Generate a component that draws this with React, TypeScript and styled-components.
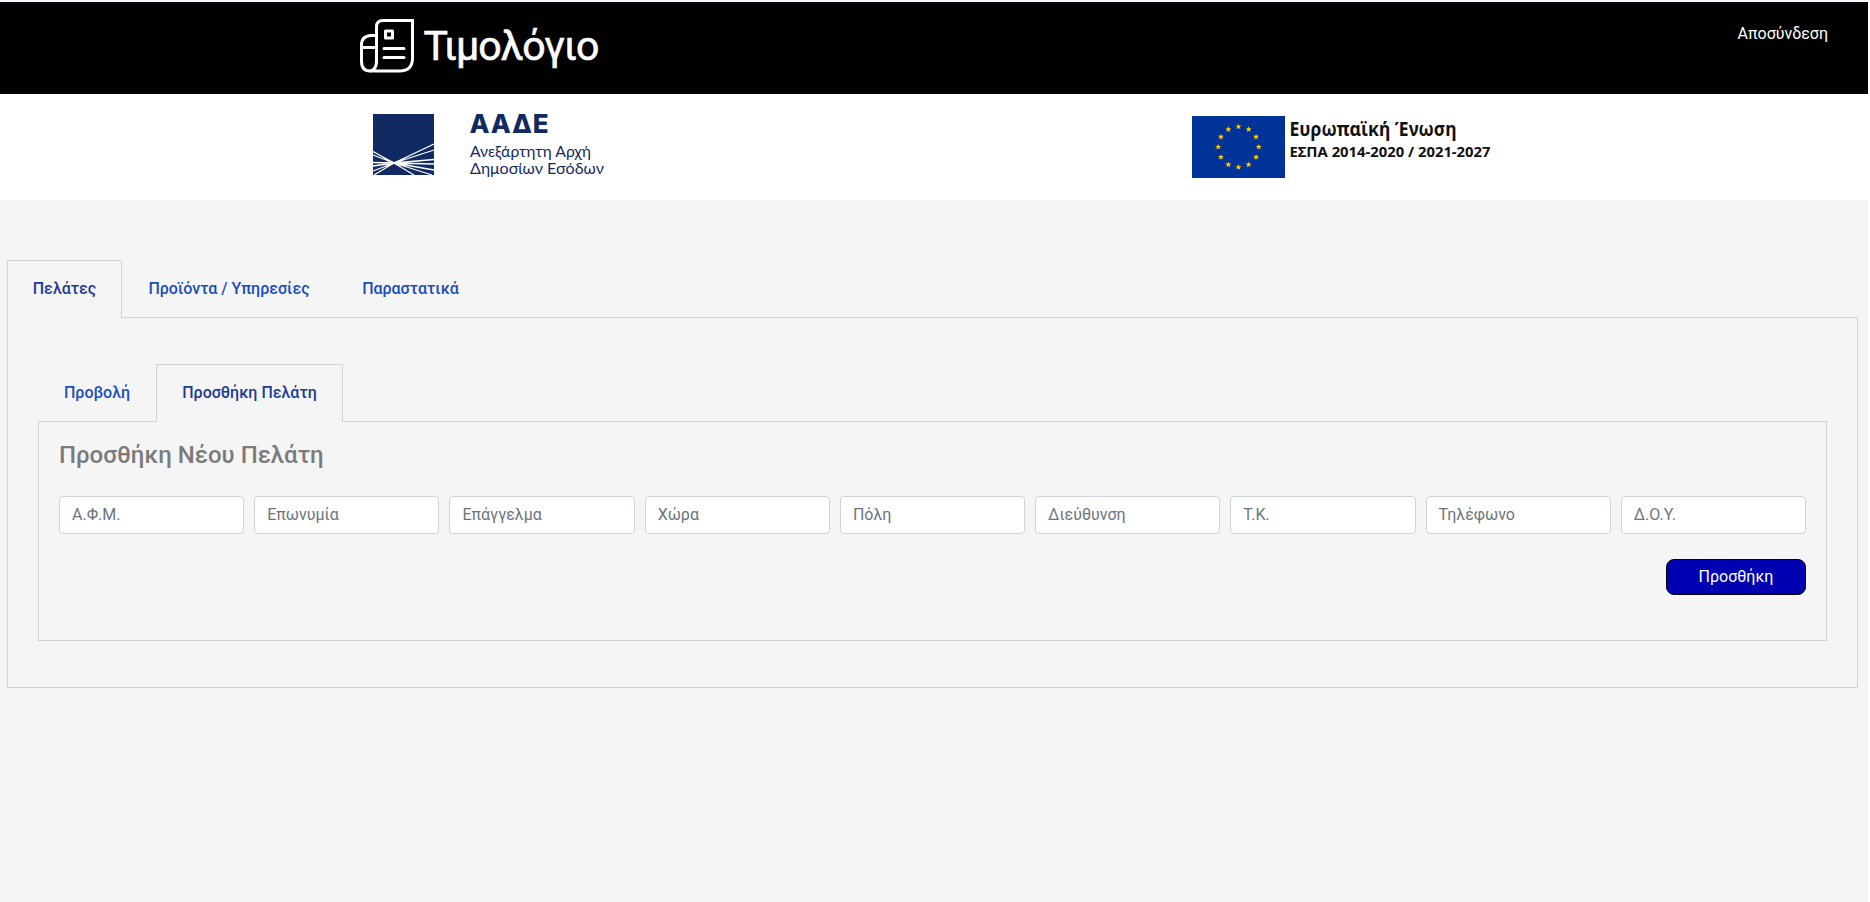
import React from "react";
import styled, { createGlobalStyle } from "styled-components";

const Global = createGlobalStyle`
  *, *::before, *::after { box-sizing: border-box; }
  body { margin: 0; background: #f5f5f5; font-family: Roboto, "Liberation Sans", sans-serif; font-size: 16px; line-height: 24px; }
`;

const Page = styled.div`
  min-height: 902px;
  display: flex;
  flex-direction: column;
  border-right: 2px solid #fff;
  background: #f5f5f5;
`;

const TopBar = styled.header`
  height: 94px;
  display: flex;
  justify-content: space-between;
  align-items: flex-start;
  background: #000;
  border-top: 2px solid #f3f6fb;
  padding: 16px 40px 0 360px;
`;

const Artwork = styled.svg`
  display: block;
  overflow: visible;
`;

const Logout = styled.a`
  color: #fff;
  line-height: 24px;
  margin-top: 4px;
  text-decoration: none;
`;

const Sponsors = styled.div`
  height: 106px;
  display: flex;
  justify-content: space-between;
  align-items: flex-start;
  background: #fff;
  padding: 20px 375px 0 373px;
`;

const SvgText = styled.text<{ $family: string; $weight?: number }>`
  font-family: ${(p) => p.$family}, sans-serif;
  font-weight: ${(p) => p.$weight ?? 400};
`;

const Main = styled.main`
  padding: 60px 10px 0 7px;
`;

const Tabs = styled.nav`
  display: flex;
`;

const Tab = styled.button<{ $active?: boolean; $width: number }>`
  width: ${(p) => p.$width}px;
  height: 58px;
  margin-bottom: -1px;
  padding: 0 0 2px;
  position: relative;
  border: 1px solid ${(p) => (p.$active ? "#d3d3d3" : "transparent")};
  border-bottom: 0;
  background: ${(p) => (p.$active ? "#f5f5f5" : "transparent")};
  color: ${(p) => (p.$active ? "#1c3c94" : "#1a4dbe")};
  font: 500 16px/24px Roboto, sans-serif;
`;

const Panel = styled.section<{ $inner?: boolean }>`
  border: 1px solid #d3d3d3;
  height: ${(p) => (p.$inner ? 220 : 371)}px;
  padding: ${(p) => (p.$inner ? "19px 20px 0" : "46px 30px 0")};
`;

const Title = styled.h2`
  margin: 0 0 26px;
  font-size: 24px;
  line-height: 29px;
  font-weight: 500;
  color: #7b7b7b;
`;

const Fields = styled.div`
  display: grid;
  grid-template-columns: repeat(9, 1fr);
  gap: 10px;
`;

const Field = styled.input`
  width: 100%;
  min-width: 0;
  height: 38px;
  padding: 5px 12px 7px;
  border: 1px solid #ced4da;
  border-radius: 4px;
  background: #fff;
  font: 400 16px/24px Roboto, sans-serif;
  &::placeholder { color: #6c757d; opacity: 1; }
`;

const Actions = styled.div`
  display: flex;
  justify-content: flex-end;
  margin-top: 25px;
`;

const Submit = styled.button`
  width: 140px;
  height: 36px;
  padding: 0 0 1px;
  border: 1px solid #000;
  border-radius: 8px;
  background: #0000b3;
  color: #fff;
  font: 400 16px/24px Roboto, sans-serif;
`;

const stars = Array.from({ length: 12 }, (_, i) => {
  const a = (i * Math.PI) / 6;
  const cx = 46.5 + 20.3 * Math.sin(a);
  const cy = 31 - 20.3 * Math.cos(a);
  return Array.from({ length: 10 }, (_, k) => {
    const r = k % 2 ? 1.3 : 3.2;
    const b = (k * Math.PI) / 5;
    return `${(cx + r * Math.sin(b)).toFixed(2)},${(cy - r * Math.cos(b)).toFixed(2)}`;
  }).join(" ");
});

const placeholders = ["Α.Φ.Μ.", "Επωνυμία", "Επάγγελμα", "Χώρα", "Πόλη", "Διεύθυνση", "Τ.Κ.", "Τηλέφωνο", "Δ.Ο.Υ."];

export default function App() {
  return (
    <Page>
      <Global />
      <TopBar>
        <Artwork width="244" height="60" fill="none" stroke="#fff" strokeWidth="3">
          <path d="M16.500 46V9Q16.500 2.500 23 2.500H52.500V40Q52.500 53 39.500 53H10" />
          <path d="M16.500 17.500H11Q1.500 18 1.500 27V43Q1.500 53 10 53Q16.500 52 16.500 43" />
          <path d="M1.500 29.500H16.500" />
          <path d="M25.500 13H32.500V20H25.500Z M24 30.500H44 M24 39.500H44" strokeLinejoin="round" strokeLinecap="round" />
          <SvgText $family="Roboto" x="63.500" y="41.700" fontSize="41" textLength="176" lengthAdjust="spacing" fill="#fff" strokeWidth="0.6">Τιμολόγιο</SvgText>
        </Artwork>
        <Logout>Αποσύνδεση</Logout>
      </TopBar>
      <Sponsors>
        <Artwork width="240" height="72">
          <rect width="61" height="61" fill="#112b62" />
          <path d="M0 37.500L21 49L61 30M21 49L61 36M21 49L61 45.500M21 49L61 50M21 49L61 56M21 49L59 61M21 49L41 61M0 41L21 49L0 48.500M21 49L0 52M21 49L0 57M21 49L1 61" fill="none" stroke="#fff" strokeWidth="1.3" />
          <path d="M10 43.500L21 48L32 44L27 49L34 53L21 50L11 53L16 49Z" fill="#fff" opacity=".65" />
          <SvgText $family="Inter" $weight={800} x="96.500" y="19.300" fontSize="26" textLength="79" lengthAdjust="spacing" fill="#112b62">ΑΑΔΕ</SvgText>
          <SvgText $family="Lato" x="97" y="42.500" fontSize="15.500" textLength="121" lengthAdjust="spacingAndGlyphs" fill="#112b62">Ανεξάρτητη Αρχή</SvgText>
          <SvgText $family="Lato" x="97" y="60.300" fontSize="15.500" textLength="134" lengthAdjust="spacingAndGlyphs" fill="#112b62">Δημοσίων Εσόδων</SvgText>
        </Artwork>
        <Artwork width="301" height="72">
          <rect y="2" width="93" height="62" fill="#039" />
          <g transform="translate(0 2)" fill="#fc0">
            {stars.map((s) => <polygon key={s} points={s} />)}
          </g>
          <SvgText $family="'Noto Sans'" $weight={700} x="97.500" y="22.300" fontSize="18.700" textLength="167" lengthAdjust="spacingAndGlyphs" fill="#111">Ευρωπαϊκή Ένωση</SvgText>
          <SvgText $family="'Noto Sans'" $weight={700} x="97.500" y="43.300" fontSize="14.500" textLength="201" lengthAdjust="spacingAndGlyphs" fill="#111">ΕΣΠΑ 2014-2020 / 2021-2027</SvgText>
        </Artwork>
      </Sponsors>
      <Main>
        <Tabs>
          <Tab $active $width={115}>Πελάτες</Tab>
          <Tab $width={214}>Προϊόντα / Υπηρεσίες</Tab>
          <Tab $width={149}>Παραστατικά</Tab>
        </Tabs>
        <Panel>
          <Tabs>
            <Tab $width={118}>Προβολή</Tab>
            <Tab $active $width={187}>Προσθήκη Πελάτη</Tab>
          </Tabs>
          <Panel $inner>
            <Title>Προσθήκη Νέου Πελάτη</Title>
            <Fields>
              {placeholders.map((p) => <Field key={p} placeholder={p} />)}
            </Fields>
            <Actions><Submit>Προσθήκη</Submit></Actions>
          </Panel>
        </Panel>
      </Main>
    </Page>
  );
}
